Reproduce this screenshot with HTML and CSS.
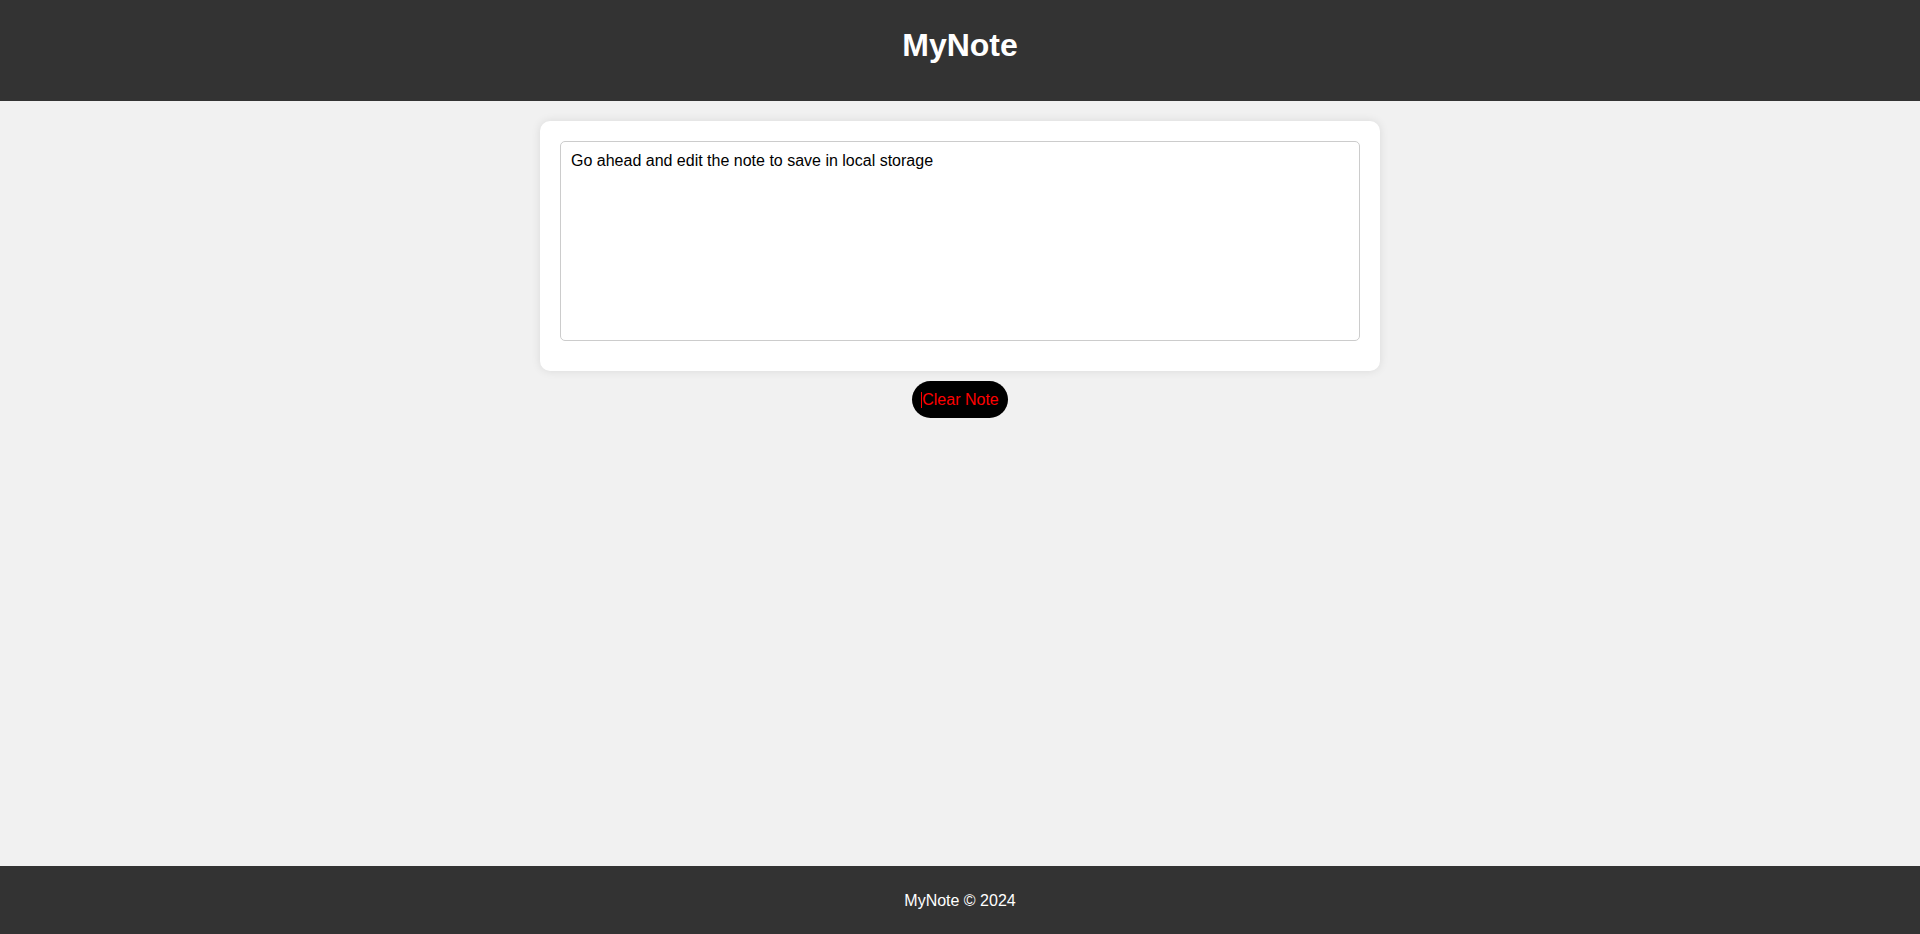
FILE: index.html
```html
<!DOCTYPE html>
<html lang="en">
<head>
<meta charset="UTF-8">
<title>MyNote</title>
<link rel="stylesheet" href="styles.css">
</head>
<body>
<header class="site-header">
  <h1 class="site-title">MyNote</h1>
</header>
<main class="main">
  <div class="note-card">
    <textarea class="note-input">Go ahead and edit the note to save in local storage</textarea>
  </div>
  <button class="clear-btn"><span class="caret"></span>Clear Note</button>
</main>
<footer class="site-footer">
  <p class="footer-text">MyNote © 2024</p>
</footer>
</body>
</html>
```
FILE: styles.css
```css
* { box-sizing: border-box; }
html, body { margin: 0; padding: 0; }
body {
  font-family: "Liberation Sans", Arial, sans-serif;
  background: #f1f1f1;
  min-height: 100vh;
  display: flex;
  flex-direction: column;
}
.site-header {
  background: #333333;
  color: #ffffff;
  height: 101px;
  padding-top: 27px;
  text-align: center;
}
.site-title {
  margin: 0;
  font-size: 32px;
  font-weight: bold;
  line-height: 37px;
}
.main {
  flex: 1;
  display: flex;
  flex-direction: column;
  align-items: center;
  padding-top: 20px;
}
.note-card {
  width: 840px;
  background: #ffffff;
  border-radius: 10px;
  box-shadow: 0 0 10px rgba(0, 0, 0, 0.1);
  padding: 20px 20px 30px;
}
.note-input {
  display: block;
  width: 800px;
  height: 200px;
  border: 1px solid #cccccc;
  border-radius: 5px;
  padding: 10px;
  font-family: "Liberation Sans", Arial, sans-serif;
  font-size: 16px;
  color: #000000;
  resize: none;
  outline: none;
}
.clear-btn {
  margin-top: 10px;
  height: 37px;
  padding: 0 9px;
  background: #000000;
  color: #ff0000;
  border: none;
  border-radius: 19px;
  font-family: "Liberation Sans", Arial, sans-serif;
  font-size: 16px;
  display: flex;
  align-items: center;
  cursor: pointer;
}
.caret {
  display: inline-block;
  width: 1px;
  height: 16px;
  background: #ff0000;
}
.site-footer {
  background: #333333;
  color: #ffffff;
  height: 68px;
  padding-top: 26px;
  text-align: center;
}
.footer-text {
  margin: 0;
  font-size: 16px;
  line-height: 18px;
}
```
